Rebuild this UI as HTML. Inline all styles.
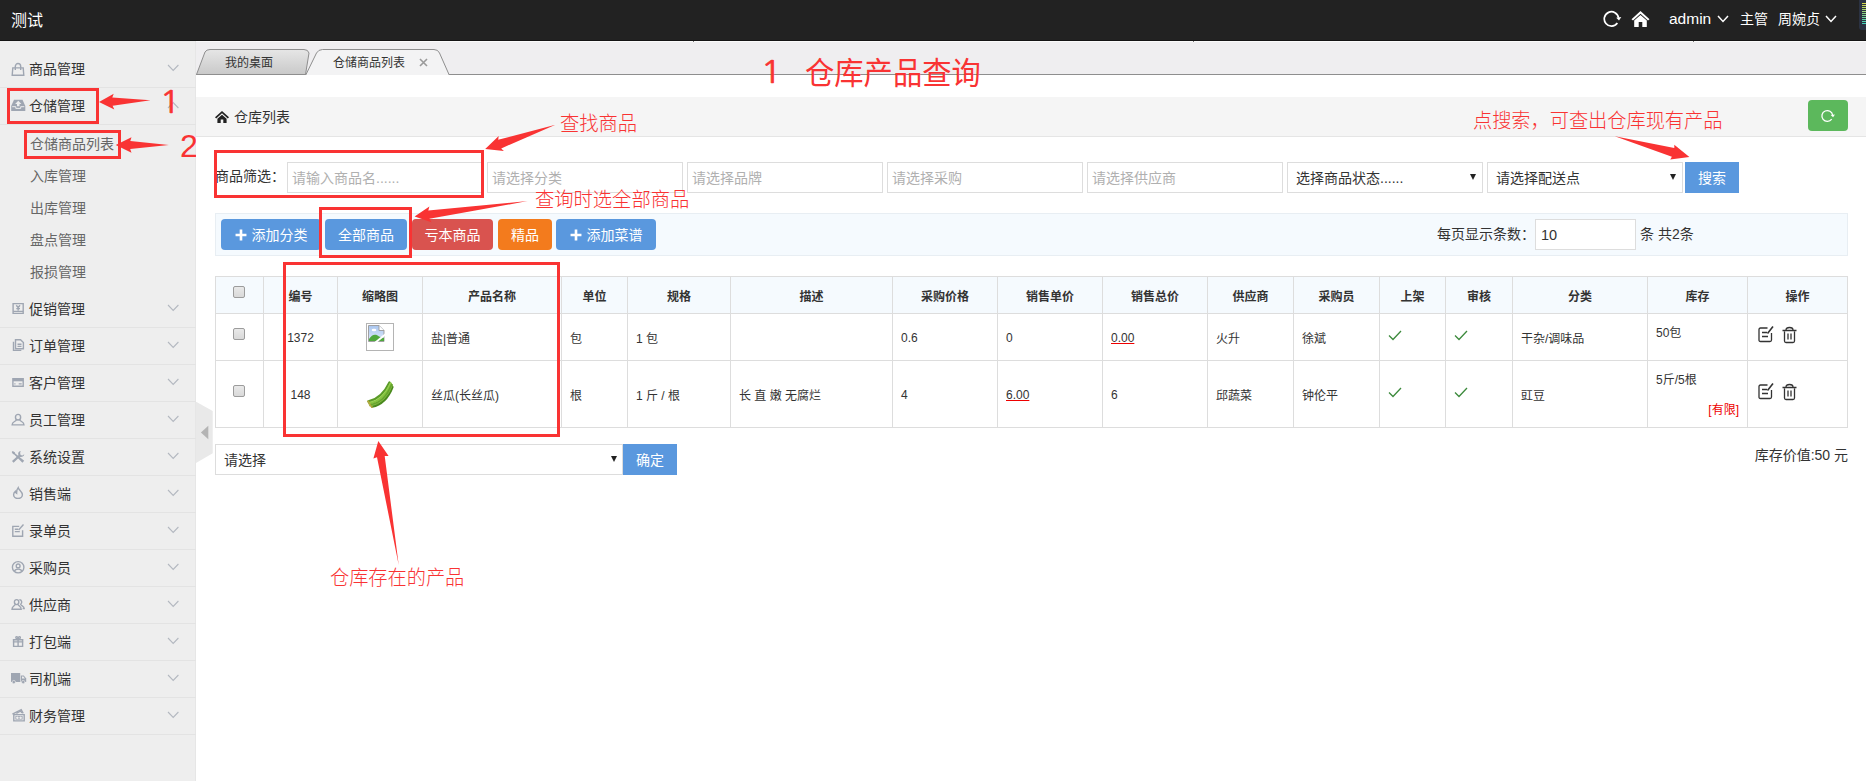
<!DOCTYPE html>
<html lang="zh-CN">
<head>
<meta charset="utf-8">
<title>仓储商品列表</title>
<style>
*{box-sizing:border-box;margin:0;padding:0}
html,body{width:1866px;height:781px;overflow:hidden;background:#fff}
body{font-family:"Liberation Sans","Noto Sans CJK SC",sans-serif;font-size:14px;color:#333;position:relative}
.abs{position:absolute}
#hdr{position:absolute;left:0;top:0;width:1866px;height:41px;background:#222;border-bottom:1px solid #141414}
#hdr .logo{position:absolute;left:11px;top:0;line-height:41px;font-size:16px;color:#fff}
#hdr .t{position:absolute;top:0;line-height:38px;color:#fff;font-size:14px;white-space:nowrap}
#side{position:absolute;left:0;top:41px;width:196px;height:740px;background:#eee;border-right:1px solid #e6e6e6}
.mi{position:absolute;left:0;width:196px;height:37px;border-bottom:1px solid #e3e3e3}
.mi span{position:absolute;left:29px;top:0;line-height:37px;font-size:14px;color:#333;white-space:nowrap}
.mi svg.ic{position:absolute;left:10px;top:10px}
.mi svg.ch{position:absolute;left:167px;top:13px}
.sub{position:absolute;left:30px;font-size:14px;color:#666;line-height:33px;height:32px;white-space:nowrap}
#tabs{position:absolute;left:196px;top:41px;width:1670px;height:34px;background:#efeef0;border-bottom:1px solid #8e8e8e;border-top:1px solid #fafafa}
#bc{position:absolute;left:196px;top:97px;width:1670px;height:40px;background:#f5f5f5;border-bottom:1px solid #e5e5e5}
.inp{position:absolute;top:162px;width:196px;height:31px;border:1px solid #ddd;background:#fff;font-size:14px;color:#b0b0b0;line-height:30px;padding-left:4px;white-space:nowrap;overflow:hidden}
.sel{color:#333;padding-left:8px}
.sel:after{content:"";position:absolute;right:6px;top:11px;border:3.5px solid transparent;border-top:6px solid #222;border-bottom:0}
.btn{position:absolute;height:31px;line-height:32px;color:#fff;font-size:14px;text-align:center;border-radius:4px;white-space:nowrap}
.blue{background:#5a98de}
#bar{position:absolute;left:215px;top:213px;width:1633px;height:43px;background:#f5fafe;border:1px solid #e8eef3}
table{border-collapse:collapse}
#tb{position:absolute;left:215px;top:276px;width:1633px;table-layout:fixed;font-size:12px;color:#333}
#tb th,#tb td{border:1px solid #ddd;padding:0 8px;text-align:left;vertical-align:middle;white-space:nowrap;overflow:hidden}
#tb th{background:#f5fafe;height:37px;text-align:center;font-weight:bold;font-size:12px;padding:0}
#tb td.c{text-align:center;padding:0}
#tb td.n{padding-top:2px}
#tb a{color:#333;text-decoration:underline;text-decoration-color:#e00}
.cb{display:inline-block;width:12px;height:12px;border:1px solid #9c9c9c;border-radius:2px;background:linear-gradient(#e9e9e9,#d9d9d9);vertical-align:middle}
.ann{position:absolute;color:#f93333;white-space:nowrap;transform:scaleY(1.05);font-weight:300;font-family:"Liberation Sans","Noto Sans CJK SC",sans-serif}
.rb{position:absolute;border:3px solid #f93333}
</style>
</head>
<body>

<div id="hdr">
  <div class="logo">测试</div>
  <svg class="abs" style="left:1603px;top:10px" width="19" height="19" viewBox="0 0 19 19"><path d="M14.35 13.1 A7.2 7.2 0 1 1 15.6 7.9" fill="none" stroke="#fff" stroke-width="1.7"/><path d="M13.2 7.7 L18.3 7.1 L16 10.4 Z" fill="#fff"/></svg>
  <svg class="abs" style="left:1631px;top:10px" width="19" height="18" viewBox="0 0 19 18"><path d="M9.5 1 L0.5 9.2 L2 10.6 L9.5 3.8 L17 10.6 L18.5 9.2 Z" fill="#fff"/><path d="M3.2 10.6 L9.5 5 L15.8 10.6 V17 H11.3 V12 H7.7 V17 H3.2 Z" fill="#fff"/></svg>
  <div class="t" style="left:1669px;font-size:15.5px;line-height:37px">admin</div>
  <svg class="abs" style="left:1717px;top:15px" width="12" height="8" viewBox="0 0 12 8"><path d="M1 1 L6 6.4 L11 1" fill="none" stroke="#fff" stroke-width="1.5"/></svg>
  <div class="t" style="left:1740px">主管</div>
  <div class="t" style="left:1778px">周婉贞</div>
  <svg class="abs" style="left:1825px;top:15px" width="12" height="8" viewBox="0 0 12 8"><path d="M1 1 L6 6.4 L11 1" fill="none" stroke="#fff" stroke-width="1.5"/></svg>
  <div class="abs" style="left:1859px;top:0;width:7px;height:30px;background:#2b3242;border-radius:0 0 0 3px;overflow:hidden"><div class="abs" style="left:3px;top:3px;width:4px;height:22px;background:repeating-linear-gradient(to bottom,transparent 0,transparent 1px,#2b3242 1px,#2b3242 2px),linear-gradient(to bottom,#d8d848,#36cfc0)"></div></div>
</div>
<div id="side">
  <div class="mi" style="top:10px"><svg class="ic" style="left:0;top:0" width="30" height="36" viewBox="0 0 30 36"><g transform="translate(11.60 11.90) scale(1.000 1.000)"><path d="M1.2 5 H11.6 L12.2 12.3 H0.6 Z" fill="none" stroke="#9fa6b2" stroke-width="1.4" vector-effect="non-scaling-stroke"/><path d="M3.7 7 V3.6 A2.7 3 0 0 1 9.100 3.6 V7" fill="none" stroke="#9fa6b2" stroke-width="1.4" vector-effect="non-scaling-stroke"/></g></svg><span>商品管理</span><svg class="ch" width="13" height="8" viewBox="0 0 13 8"><path d="M1 1 L6.2 6.4 L11.4 1" fill="none" stroke="#b3b8c0" stroke-width="1.1"/></svg></div>
  <div class="mi" style="top:47px"><svg class="ic" style="left:0;top:0" width="30" height="36" viewBox="0 0 30 36"><g transform="translate(11.20 11.80) scale(1.000 1.000)"><path d="M2.8 0 H11.3 L14.1 6.3 V11.2 H0 V6.3 Z" fill="#9fa6b2"/><path d="M7.050 1 L10.2 4.2 H8.3 V6.4 H5.8 V4.2 H3.9 Z" fill="#eee"/><path d="M1 6.900 H4.600 V8.600 H9.500 V6.900 H13.100" fill="none" stroke="#eee" stroke-width="1" vector-effect="non-scaling-stroke"/></g></svg><span>仓储管理</span><svg class="ch" width="13" height="8" viewBox="0 0 13 8"><path d="M1 7 L6.2 1.6 L11.4 7" fill="none" stroke="#b3b8c0" stroke-width="1.1"/></svg></div>
  <div class="mi" style="top:250px"><svg class="ic" style="left:0;top:0" width="30" height="36" viewBox="0 0 30 36"><g transform="translate(12.50 12.00) scale(1.000 1.000)"><path d="M0.6 0.6 H10.7 V10.4 H0.6 Z" fill="none" stroke="#9fa6b2" stroke-width="1.4" vector-effect="non-scaling-stroke"/><path d="M3.8 2.200 L5.650 4.600 L7.500 2.200 M5.650 4.600 V7.400 M3.800 5.600 H7.500 M0.600 8.400 H10.700" fill="none" stroke="#9fa6b2" stroke-width="1.4" vector-effect="non-scaling-stroke"/></g></svg><span>促销管理</span><svg class="ch" width="13" height="8" viewBox="0 0 13 8"><path d="M1 1 L6.2 6.4 L11.4 1" fill="none" stroke="#b3b8c0" stroke-width="1.1"/></svg></div>
  <div class="mi" style="top:287px"><svg class="ic" style="left:0;top:0" width="30" height="36" viewBox="0 0 30 36"><g transform="translate(12.90 11.20) scale(1.000 1.000)"><path d="M2.6 0.6 H7.6 L10.5 3.4 V9.6 H2.6 Z" fill="none" stroke="#9fa6b2" stroke-width="1.4" vector-effect="non-scaling-stroke"/><path d="M0.6 2.6 V11.2 H8.4" fill="none" stroke="#9fa6b2" stroke-width="1.4" vector-effect="non-scaling-stroke"/><path d="M4.600 5 H8.600 M4.600 7.200 H8.600" fill="none" stroke="#9fa6b2" stroke-width="1.4" vector-effect="non-scaling-stroke"/></g></svg><span>订单管理</span><svg class="ch" width="13" height="8" viewBox="0 0 13 8"><path d="M1 1 L6.2 6.4 L11.4 1" fill="none" stroke="#b3b8c0" stroke-width="1.1"/></svg></div>
  <div class="mi" style="top:324px"><svg class="ic" style="left:0;top:0" width="30" height="36" viewBox="0 0 30 36"><g transform="translate(12.30 13.00) scale(1.000 1.000)"><path d="M0.6 0.6 H10.9 V8.2 H0.6 Z" fill="none" stroke="#9fa6b2" stroke-width="1.4" vector-effect="non-scaling-stroke"/><path d="M0.600 0.600 H10.900 V3.300 H0.600 Z" fill="#9fa6b2"/><path d="M6.400 5.900 H9.400 M2 5.900 H3.200" fill="none" stroke="#9fa6b2" stroke-width="1.4" vector-effect="non-scaling-stroke"/></g></svg><span>客户管理</span><svg class="ch" width="13" height="8" viewBox="0 0 13 8"><path d="M1 1 L6.2 6.4 L11.4 1" fill="none" stroke="#b3b8c0" stroke-width="1.1"/></svg></div>
  <div class="mi" style="top:361px"><svg class="ic" style="left:0;top:0" width="30" height="36" viewBox="0 0 30 36"><g transform="translate(11.50 11.80) scale(1.000 1.000)"><ellipse cx="6.550" cy="3.400" rx="2.600" ry="2.800" fill="none" stroke="#9fa6b2" stroke-width="1.4" vector-effect="non-scaling-stroke"/><path d="M4.900 5.800 C4.500 8 0.600 7.600 0.600 11.100 H12.500 C12.500 7.600 8.600 8 8.200 5.800" fill="none" stroke="#9fa6b2" stroke-width="1.4" vector-effect="non-scaling-stroke"/></g></svg><span>员工管理</span><svg class="ch" width="13" height="8" viewBox="0 0 13 8"><path d="M1 1 L6.2 6.4 L11.4 1" fill="none" stroke="#b3b8c0" stroke-width="1.1"/></svg></div>
  <div class="mi" style="top:398px"><svg class="ic" style="left:0;top:0" width="30" height="36" viewBox="0 0 30 36"><g transform="translate(11.40 11.80) scale(1.000 1.000)"><path d="M0.300 1.200 L1.300 0.200 L3.400 1.400 L3.800 2.700 L12.800 10 L11 11.900 L2.800 3.600 L1.500 3.300 Z" fill="#9fa6b2"/><path d="M9.300 0.300 A3.200 3.200 0 0 0 7 4.400 L0.600 10.200 L2.200 11.900 L8.400 5.900 A3.200 3.200 0 0 0 12.900 3.400 L11 4.800 L9.200 4.200 L8.700 2.300 Z" fill="#9fa6b2"/></g></svg><span>系统设置</span><svg class="ch" width="13" height="8" viewBox="0 0 13 8"><path d="M1 1 L6.2 6.4 L11.4 1" fill="none" stroke="#b3b8c0" stroke-width="1.1"/></svg></div>
  <div class="mi" style="top:435px"><svg class="ic" style="left:0;top:0" width="30" height="36" viewBox="0 0 30 36"><g transform="translate(13.00 11.00) scale(1.000 1.000)"><path d="M5.200 0.600 C5.600 3 9.400 4.600 9.400 7.800 A4.400 3.600 0 0 1 0.600 7.800 C0.600 6.400 1.400 5.200 2.400 4.400 C2.500 5.400 3 6 3.600 6.300 C3.300 4 3.800 2.200 5.200 0.600 Z" fill="none" stroke="#9fa6b2" stroke-width="1.4" vector-effect="non-scaling-stroke"/></g></svg><span>销售端</span><svg class="ch" width="13" height="8" viewBox="0 0 13 8"><path d="M1 1 L6.2 6.4 L11.4 1" fill="none" stroke="#b3b8c0" stroke-width="1.1"/></svg></div>
  <div class="mi" style="top:472px"><svg class="ic" style="left:0;top:0" width="30" height="36" viewBox="0 0 30 36"><g transform="translate(12.20 11.00) scale(1.000 1.000)"><path d="M10.400 6.200 V12.200 H0.600 V2.400 H7" fill="none" stroke="#9fa6b2" stroke-width="1.4" vector-effect="non-scaling-stroke"/><path d="M2.600 5.200 H6 M2.600 7.600 H7.600" fill="none" stroke="#9fa6b2" stroke-width="1.4" vector-effect="non-scaling-stroke"/><path d="M6.400 6 L11.300 0.500" fill="none" stroke="#9fa6b2" stroke-width="1.4" vector-effect="non-scaling-stroke"/></g></svg><span>录单员</span><svg class="ch" width="13" height="8" viewBox="0 0 13 8"><path d="M1 1 L6.2 6.4 L11.4 1" fill="none" stroke="#b3b8c0" stroke-width="1.1"/></svg></div>
  <div class="mi" style="top:509px"><svg class="ic" style="left:0;top:0" width="30" height="36" viewBox="0 0 30 36"><g transform="translate(11.80 11.00) scale(1.000 1.000)"><ellipse cx="6.350" cy="6.250" rx="5.750" ry="5.650" fill="none" stroke="#9fa6b2" stroke-width="1.4" vector-effect="non-scaling-stroke"/><circle cx="6.350" cy="4.900" r="1.900" fill="none" stroke="#9fa6b2" stroke-width="1.4" vector-effect="non-scaling-stroke"/><path d="M2.700 10.400 C3.200 7.400 9.500 7.400 10 10.400" fill="none" stroke="#9fa6b2" stroke-width="1.4" vector-effect="non-scaling-stroke"/></g></svg><span>采购员</span><svg class="ch" width="13" height="8" viewBox="0 0 13 8"><path d="M1 1 L6.2 6.4 L11.4 1" fill="none" stroke="#b3b8c0" stroke-width="1.1"/></svg></div>
  <div class="mi" style="top:546px"><svg class="ic" style="left:0;top:0" width="30" height="36" viewBox="0 0 30 36"><g transform="translate(11.40 12.00) scale(1.000 1.000)"><ellipse cx="5.200" cy="3.100" rx="2.200" ry="2.500" fill="none" stroke="#9fa6b2" stroke-width="1.4" vector-effect="non-scaling-stroke"/><path d="M3.800 5.300 C3.400 7.300 0.600 7 0.600 10.200 H9.800 C9.800 7 7 7.300 6.600 5.300" fill="none" stroke="#9fa6b2" stroke-width="1.4" vector-effect="non-scaling-stroke"/><path d="M8 0.700 A2.200 2.500 0 0 1 9.300 5.300 C9.700 7 12.600 7 12.800 9.600 H11.200" fill="none" stroke="#9fa6b2" stroke-width="1.4" vector-effect="non-scaling-stroke"/></g></svg><span>供应商</span><svg class="ch" width="13" height="8" viewBox="0 0 13 8"><path d="M1 1 L6.2 6.4 L11.4 1" fill="none" stroke="#b3b8c0" stroke-width="1.1"/></svg></div>
  <div class="mi" style="top:583px"><svg class="ic" style="left:0;top:0" width="30" height="36" viewBox="0 0 30 36"><g transform="translate(12.20 12.00) scale(1.000 1.000)"><path d="M1.400 3.800 H10.400 V10.400 H1.400 Z M0.600 3.800 H11.200 M5.900 3.800 V10.400 M0.600 5.900 H11.200" fill="none" stroke="#9fa6b2" stroke-width="1.4" vector-effect="non-scaling-stroke"/><path d="M5.900 3.600 C3.600 3.200 3 0.600 4.400 0.600 C5.400 0.600 5.900 2 5.900 3.600 C5.900 2 6.400 0.600 7.400 0.600 C8.800 0.600 8.200 3.200 5.900 3.600" fill="none" stroke="#9fa6b2" stroke-width="1.4" vector-effect="non-scaling-stroke"/></g></svg><span>打包端</span><svg class="ch" width="13" height="8" viewBox="0 0 13 8"><path d="M1 1 L6.2 6.4 L11.4 1" fill="none" stroke="#b3b8c0" stroke-width="1.1"/></svg></div>
  <div class="mi" style="top:620px"><svg class="ic" style="left:0;top:0" width="30" height="36" viewBox="0 0 30 36"><g transform="translate(10.60 12.00) scale(1.000 1.000)"><path d="M0.400 0 H9.600 V9 H0.400 Z" fill="#9fa6b2"/><path d="M10.200 2.400 H13.200 L15.600 5.400 V9 H10.200 Z" fill="#9fa6b2"/><path d="M11.400 3.400 H12.700 L14.300 5.500 H11.400 Z" fill="#eee"/><circle cx="3.200" cy="9.100" r="1.700" fill="#9fa6b2" stroke="#eee" stroke-width="0.6"/><circle cx="12.600" cy="9.100" r="1.700" fill="#9fa6b2" stroke="#eee" stroke-width="0.6"/></g></svg><span>司机端</span><svg class="ch" width="13" height="8" viewBox="0 0 13 8"><path d="M1 1 L6.2 6.4 L11.4 1" fill="none" stroke="#b3b8c0" stroke-width="1.1"/></svg></div>
  <div class="mi" style="top:657px"><svg class="ic" style="left:0;top:0" width="30" height="36" viewBox="0 0 30 36"><g transform="translate(11.80 11.00) scale(1.000 1.000)"><path d="M2 5.600 H12.400 V11.900 H2 Z" fill="none" stroke="#9fa6b2" stroke-width="1.4" vector-effect="non-scaling-stroke"/><path d="M3.600 6.900 H10.800 V10.600 H3.600 Z" fill="#9fa6b2"/><circle cx="5.600" cy="8.750" r="1.300" fill="#eee"/><circle cx="8.800" cy="8.750" r="1.300" fill="#eee"/><path d="M0.600 5.200 L9.400 0.600 L11.400 4.400" fill="none" stroke="#9fa6b2" stroke-width="1.4" vector-effect="non-scaling-stroke"/><path d="M4.500 4.400 L9 2 L10 4" fill="none" stroke="#9fa6b2" stroke-width="1.4" vector-effect="non-scaling-stroke"/></g></svg><span>财务管理</span><svg class="ch" width="13" height="8" viewBox="0 0 13 8"><path d="M1 1 L6.2 6.4 L11.4 1" fill="none" stroke="#b3b8c0" stroke-width="1.1"/></svg></div>
  <div class="sub" style="top:87px">仓储商品列表</div>
  <div class="sub" style="top:119px">入库管理</div>
  <div class="sub" style="top:151px">出库管理</div>
  <div class="sub" style="top:183px">盘点管理</div>
  <div class="sub" style="top:215px">报损管理</div>
</div>
<svg class="abs" style="left:196px;top:402px" width="17" height="62" viewBox="0 0 17 62"><path d="M0 -0.300 L16.700 9 V51.200 L0 61 Z" fill="#e9e9e9"/><path d="M12.300 23.800 V37.200 L4.900 30.500 Z" fill="#b4b4b4"/></svg>

<div id="tabs">
 <svg class="abs" style="left:0;top:6px" width="260" height="28" viewBox="0 0 260 28">
  <defs><linearGradient id="tg" x1="0" y1="0" x2="0" y2="1"><stop offset="0" stop-color="#e6e6e6"/><stop offset="1" stop-color="#c9c9c9"/></linearGradient></defs>
  <path d="M0.500 26.500 L9 4 Q10.500 1.500 14 1.500 H108 Q112 1.500 113 5 L109.500 26.500 Z" fill="url(#tg)" stroke="#8e8e8e" stroke-width="1"/>
  <path d="M110 26.500 L120.500 5 Q122.500 1.500 126.500 1.500 H238 Q242 1.500 243.500 5 L253 26.500 Z" fill="#f3f3f4" stroke="#8e8e8e" stroke-width="1"/>
  <path d="M110.500 26 H252.500 V27 H110.500 Z" fill="#f3f3f4"/>
 </svg>
 <div class="abs" style="left:29px;top:9px;font-size:12px;line-height:24px;color:#333">我的桌面</div>
 <div class="abs" style="left:137px;top:9px;font-size:12px;line-height:24px;color:#333">仓储商品列表</div>
 <svg class="abs" style="left:223px;top:16px" width="9" height="9" viewBox="0 0 9 9"><path d="M1 1 L8 8 M8 1 L1 8" stroke="#9a9a9a" stroke-width="1.600" fill="none"/></svg>
</div>
<div class="abs" style="left:693px;top:41px;width:1px;height:1px;background:#777"></div><div class="abs" style="left:1193px;top:41px;width:1px;height:1px;background:#777"></div><div class="abs" style="left:1693px;top:41px;width:1px;height:1px;background:#777"></div>
<div id="bc">
 <svg class="abs" style="left:19px;top:14px" width="14" height="12" viewBox="0 0 14 12"><path d="M7 0 L0 6.200 L1.200 7.400 L7 2.300 L12.800 7.400 L14 6.200 Z" fill="#222"/><path d="M2.400 7.800 L7 3.800 L11.600 7.800 V12 H8.300 V8.600 H5.700 V12 H2.400 Z" fill="#222"/></svg>
 <div class="abs" style="left:38px;top:0;line-height:40px;font-size:14px;color:#333">仓库列表</div>
 <div class="abs" style="left:1612px;top:3px;width:40px;height:31px;border-radius:4px;background:#5cb85c"></div>
 <svg class="abs" style="left:1624px;top:11px" width="16" height="16" viewBox="0 0 16 16"><path d="M11.700 11.100 A5.400 5.400 0 1 1 12.650 7.250" fill="none" stroke="#fff" stroke-width="1.300"/><path d="M10.700 7 L15 6.500 L13.100 9.300 Z" fill="#fff"/></svg>
</div>
<div class="abs" style="left:215px;top:162px;line-height:28px;font-size:14px;color:#333">商品筛选：</div>
<div class="inp" style="left:287px">请输入商品名......</div>
<div class="inp" style="left:487px">请选择分类</div>
<div class="inp" style="left:687px">请选择品牌</div>
<div class="inp" style="left:887px">请选择采购</div>
<div class="inp" style="left:1087px">请选择供应商</div>
<div class="inp sel" style="left:1287px">选择商品状态......</div>
<div class="inp sel" style="left:1487px">请选择配送点</div>
<div class="btn blue" style="left:1685px;top:162px;width:54px;border-radius:0">搜索</div>
<div id="bar"></div>
<div class="btn blue" style="left:221px;top:219px;width:100px"><svg width="12" height="12" viewBox="0 0 11 11" style="vertical-align:-1px;margin-right:5px"><path d="M5.500 0.500 V10.500 M0.500 5.500 H10.500" stroke="#fff" stroke-width="2.400" fill="none"/></svg>添加分类</div>
<div class="btn blue" style="left:325px;top:219px;width:82px">全部商品</div>
<div class="btn" style="left:412px;top:219px;width:81px;background:#d9534f">亏本商品</div>
<div class="btn" style="left:498px;top:219px;width:54px;background:#f37b1d">精品</div>
<div class="btn blue" style="left:556px;top:219px;width:100px"><svg width="12" height="12" viewBox="0 0 11 11" style="vertical-align:-1px;margin-right:5px"><path d="M5.500 0.500 V10.500 M0.500 5.500 H10.500" stroke="#fff" stroke-width="2.400" fill="none"/></svg>添加菜谱</div>
<div class="abs" style="left:1437px;top:219px;line-height:30px;font-size:14px;color:#333">每页显示条数：</div>
<div class="abs" style="left:1535px;top:219px;width:101px;height:31px;border:1px solid #ddd;background:#fff;line-height:31px;padding-left:5px;font-size:14.5px;color:#333">10</div>
<div class="abs" style="left:1640px;top:219px;line-height:30px;font-size:14px;color:#333">条 共2条</div>
<table id="tb"><colgroup><col style="width:48px"><col style="width:74px"><col style="width:85px"><col style="width:139px"><col style="width:66px"><col style="width:103px"><col style="width:162px"><col style="width:105px"><col style="width:105px"><col style="width:105px"><col style="width:86px"><col style="width:86px"><col style="width:66px"><col style="width:67px"><col style="width:135px"><col style="width:100px"><col style="width:100px"></colgroup>
<tr><th><span class="cb" style="position:relative;top:-4px;left:-1px"></span></th><th>编号</th><th>缩略图</th><th>产品名称</th><th>单位</th><th>规格</th><th>描述</th><th>采购价格</th><th>销售单价</th><th>销售总价</th><th>供应商</th><th>采购员</th><th>上架</th><th>审核</th><th>分类</th><th>库存</th><th>操作</th></tr>
<tr style="height:47px"><td class="c"><span class="cb" style="position:relative;top:-4px;left:-1px"></span></td><td class="c n">1372</td><td class="c"><span style="display:inline-block;width:28px;height:28px;border:1px solid #b4b4b4;vertical-align:middle;position:relative;top:-0.5px"><svg class="abs" style="left:1px;top:1px" width="17" height="17" viewBox="0 0 17 17"><defs><linearGradient id="sky" x1="0" y1="0" x2="0" y2="1"><stop offset="0" stop-color="#a9c6f0"/><stop offset="1" stop-color="#dfeafa"/></linearGradient></defs><path d="M0.500 0.500 H11 L16 5.500 V16.500 H0.500 Z" fill="url(#sky)" stroke="#999" stroke-width="0.900"/><ellipse cx="6" cy="5" rx="2.300" ry="1.200" fill="#fff"/><path d="M1 14 C4 9 8 8.500 11 11.500 L16 13 V16 H1 Z" fill="#4fa83d"/><path d="M11 0.500 V5.500 H16" fill="#fff" stroke="#999" stroke-width="0.900"/><path d="M6.500 17 L17 8.500 V11 L9.500 17 Z" fill="#fff"/></svg></span></td><td>盐|普通</td><td>包</td><td>1 包</td><td></td><td class="n">0.6</td><td class="n">0</td><td class="n"><a>0.00</a></td><td>火升</td><td>徐斌</td><td style="padding-left:8px"><svg width="14" height="11" viewBox="0 0 14 11" style="vertical-align:middle;position:relative;top:-2px"><path d="M1 5.500 L5 9.500 L13 1" fill="none" stroke="#3c8a3c" stroke-width="1.300"/></svg></td><td style="padding-left:8px"><svg width="14" height="11" viewBox="0 0 14 11" style="vertical-align:middle;position:relative;top:-2px"><path d="M1 5.500 L5 9.500 L13 1" fill="none" stroke="#3c8a3c" stroke-width="1.300"/></svg></td><td>干杂/调味品</td><td style="vertical-align:top;padding-top:9px">50包</td><td><svg width="16" height="18" viewBox="0 0 16 18" style="vertical-align:middle;position:relative;top:-3px;margin-left:2px"><path d="M13.500 8 V15 Q13.500 16.500 12 16.500 H2.500 Q1 16.500 1 15 V4.500 Q1 3 2.500 3 H9.500" fill="none" stroke="#333" stroke-width="1.300"/><path d="M4 7.500 H9 M4 11.500 H10" stroke="#333" stroke-width="1.300"/><path d="M9.500 8.500 L15 1.500" stroke="#333" stroke-width="1.600"/></svg><svg width="15" height="18" viewBox="0 0 15 18" style="vertical-align:middle;margin-left:8px;position:relative;top:-2px"><path d="M0.500 4.500 H14.500 M4 4 Q4 1.500 7.500 1.500 Q11 1.500 11 4 M2.500 5.500 V15 Q2.500 16.500 4 16.500 H11 Q12.500 16.500 12.500 15 V5.500 M6 7.500 V13.500 M9 7.500 V13.500" fill="none" stroke="#333" stroke-width="1.300"/></svg></td></tr>
<tr style="height:67px"><td class="c"><span class="cb" style="position:relative;top:-4px;left:-1px"></span></td><td class="c n">148</td><td class="c"><svg width="28" height="28" viewBox="0 0 28 28" style="vertical-align:middle;position:relative;top:1px"><g fill="none" stroke-linecap="round"><path d="M2.500 20.500 Q16 17.500 23.500 1.500" stroke="#5a9a28" stroke-width="2.400"/><path d="M3.500 22.300 Q17.500 19.500 24.800 2.500" stroke="#86c440" stroke-width="2.400"/><path d="M4.500 24.200 Q19 21.300 25.800 4" stroke="#66a52c" stroke-width="2.400"/><path d="M6 25.600 Q20 23 26.500 6" stroke="#4a8a1e" stroke-width="2.200"/><path d="M3.500 21.400 Q17 18.500 24.200 2.200" stroke="#a6d860" stroke-width="0.600"/><path d="M5.200 24.900 Q19.500 22.300 26.200 5" stroke="#9ccc55" stroke-width="0.600"/></g><g fill="#b9a63c"><circle cx="2.300" cy="20.500" r="1.100"/><circle cx="3.300" cy="22.400" r="1.100"/><circle cx="4.300" cy="24.300" r="1.100"/><circle cx="5.800" cy="25.900" r="1"/></g></svg></td><td>丝瓜(长丝瓜)</td><td>根</td><td>1 斤 / 根</td><td>长 直 嫩 无腐烂</td><td class="n">4</td><td class="n"><a>6.00</a></td><td class="n">6</td><td>邱蔬菜</td><td>钟伦平</td><td style="padding-left:8px"><svg width="14" height="11" viewBox="0 0 14 11" style="vertical-align:middle;position:relative;top:-2px"><path d="M1 5.500 L5 9.500 L13 1" fill="none" stroke="#3c8a3c" stroke-width="1.300"/></svg></td><td style="padding-left:8px"><svg width="14" height="11" viewBox="0 0 14 11" style="vertical-align:middle;position:relative;top:-2px"><path d="M1 5.500 L5 9.500 L13 1" fill="none" stroke="#3c8a3c" stroke-width="1.300"/></svg></td><td>豇豆</td><td style="vertical-align:top;padding-top:9px;line-height:20px">5斤/5根<div style="text-align:right;color:#e00;font-size:12px;line-height:16px;margin-top:12px">[有限]</div></td><td><svg width="16" height="18" viewBox="0 0 16 18" style="vertical-align:middle;position:relative;top:-3px;margin-left:2px"><path d="M13.500 8 V15 Q13.500 16.500 12 16.500 H2.500 Q1 16.500 1 15 V4.500 Q1 3 2.500 3 H9.500" fill="none" stroke="#333" stroke-width="1.300"/><path d="M4 7.500 H9 M4 11.500 H10" stroke="#333" stroke-width="1.300"/><path d="M9.500 8.500 L15 1.500" stroke="#333" stroke-width="1.600"/></svg><svg width="15" height="18" viewBox="0 0 15 18" style="vertical-align:middle;margin-left:8px;position:relative;top:-2px"><path d="M0.500 4.500 H14.500 M4 4 Q4 1.500 7.500 1.500 Q11 1.500 11 4 M2.500 5.500 V15 Q2.500 16.500 4 16.500 H11 Q12.500 16.500 12.500 15 V5.500 M6 7.500 V13.500 M9 7.500 V13.500" fill="none" stroke="#333" stroke-width="1.300"/></svg></td></tr>
</table>
<div class="abs" style="left:215px;top:444px;width:408px;height:31px;border:1px solid #ddd;line-height:31px;padding-left:8px;font-size:14px;color:#333">请选择<span class="abs" style="right:5px;top:11px;border:3.500px solid transparent;border-top:6px solid #222;border-bottom:0"></span></div>
<div class="btn blue" style="left:623px;top:444px;width:54px;border-radius:0;font-size:14px">确定</div>
<div class="abs" style="right:18px;top:441px;line-height:28px;font-size:14px;color:#333">库存价值:50 元</div>
<div class="rb" style="left:7px;top:88px;width:92px;height:36px"></div>
<div class="rb" style="left:24px;top:130px;width:97px;height:29px"></div>
<div class="rb" style="left:214px;top:150px;width:270px;height:48px"></div>
<div class="rb" style="left:319px;top:207px;width:93px;height:51px"></div>
<div class="rb" style="left:283px;top:262px;width:277px;height:175px"></div>
<svg class="abs" style="left:0;top:0" width="1866" height="781" viewBox="0 0 1866 781"><g fill="#f93333"><path d="M99.0 102.1 L114.3 109.5 L112.6 105.7 L150.6 100.3 L112.3 97.5 L113.7 93.7 Z"/><path d="M115.7 144.9 L131.5 152.8 L130.2 149.0 L168.8 145.1 L130.3 141.0 L131.5 137.2 Z"/><path d="M485.2 149.0 L503.9 151.0 L501.2 148.4 L555.5 124.8 L498.2 139.7 L498.7 135.9 Z"/><path d="M414.6 216.6 L431.5 222.3 L429.4 218.8 L527.6 201.1 L428.3 210.5 L429.4 206.6 Z"/><path d="M1689.4 156.9 L1674.3 144.8 L1674.3 148.0 L1614.8 136.3 L1671.9 156.8 L1670.2 159.5 Z"/><path d="M378.3 441.1 L373.4 458.6 L377.0 457.2 L398.7 565.0 L384.7 455.9 L388.6 456.1 Z"/></g></svg>
<div class="ann" style="left:762px;top:52px;font-size:31px;line-height:40px;font-family:NanumGothic,sans-serif;-webkit-text-stroke:0.6px #f93333;font-weight:400;transform:scaleX(1.15)">1</div>
<div class="ann" style="left:805px;top:54px;font-size:29.3px;line-height:38px;font-weight:400">仓库产品查询</div>
<div class="ann" style="left:161px;top:82px;font-size:30.5px;line-height:40px;font-family:NanumGothic,sans-serif;-webkit-text-stroke:0.6px #f93333;font-weight:400;transform:scaleX(1.15)">1</div>
<div class="abs" style="left:170px;top:120px;width:26px;height:50px;overflow:hidden"><div class="ann" style="left:10px;top:6px;font-size:32px;line-height:40px;transform:none;font-weight:400">2</div></div>
<div class="ann" style="left:560px;top:111.5px;font-size:19.3px;line-height:26px">查找商品</div>
<div class="ann" style="left:535px;top:188px;font-size:19.3px;line-height:26px">查询时选全部商品</div>
<div class="ann" style="left:1473px;top:109px;font-size:19.2px;line-height:26px">点搜索，可查出仓库现有产品</div>
<div class="ann" style="left:330px;top:566px;font-size:19.2px;line-height:26px">仓库存在的产品</div>
</body>
</html>
